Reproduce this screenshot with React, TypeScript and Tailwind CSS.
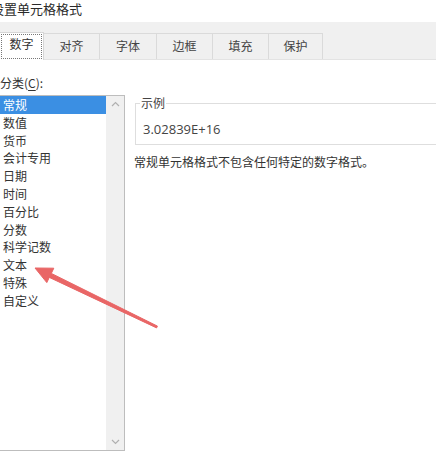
import React from "react";

const items = ["常规", "数值", "货币", "会计专用", "日期", "时间", "百分比", "分数", "科学记数", "文本", "特殊", "自定义"];
const tabs = [
  { t: "对齐", w: "w-[56px]" },
  { t: "字体", w: "w-[57px]" },
  { t: "边框", w: "w-[56px]" },
  { t: "填充", w: "w-[56px]" },
  { t: "保护", w: "w-[54px]" },
];

export default function App() {
  return (
    <div
      className="relative w-[436px] h-[459px] bg-white overflow-hidden text-[12px] text-[#333]"
      style={{ fontFamily: '"Noto Sans CJK SC", "Noto Sans", sans-serif' }}
    >
      {/* title */}
      <div className="h-[22px] flex items-center">
        <span className="-ml-[9px] text-[13px] leading-[16px] text-[#2a2a2a] -mt-[5px]">设置单元格格式</span>
      </div>

      {/* tab bar */}
      <div className="h-[38px] bg-[#f0f0f0] flex items-end border-b border-[#e3e3e3]">
        <div className="w-[44px] h-[28px] bg-white border-t border-r border-[#d6d6d6] p-[1px] relative top-[1px]">
          <div className="w-full h-full border border-dotted border-[#777] flex items-center justify-center pb-[6px] leading-[14px] text-[#333]">
            数字
          </div>
        </div>
        {tabs.map((tb) => (
          <div
            key={tb.t}
            className={`${tb.w} h-[26px] border-t border-r border-[#dadada] flex items-center justify-center pb-[1px] leading-[14px] text-[#444]`}
          >
            {tb.t}
          </div>
        ))}
      </div>

      {/* content */}
      <div className="flex">
        <div className="w-[125px] shrink-0">
          <div className="mt-[15px] h-[16px] leading-[16px] text-[#333]">
            分类(<span className="underline underline-offset-2">C</span>):
          </div>
          <div className="mt-[4px] h-[356px] border-t border-r border-b border-[#bdbdbd] flex">
            <div className="flex-1">
              {items.map((it, i) => (
                <div
                  key={it}
                  className={`h-[17.8px] leading-[17.8px] pl-[3px] ${i === 0 ? "bg-[#3b8fe3] text-white" : "text-[#333]"}`}
                >
                  {it}
                </div>
              ))}
            </div>
            <div className="w-[18px] bg-[#f0f0f0] flex flex-col justify-between items-center py-[5px]">
              <svg width="9" height="6" viewBox="0 0 9 6">
                <path d="M1 5 L4.5 1.5 L8 5" fill="none" stroke="#b0b0b0" strokeWidth="1.2" />
              </svg>
              <svg width="9" height="6" viewBox="0 0 9 6">
                <path d="M1 1 L4.5 4.5 L8 1" fill="none" stroke="#b0b0b0" strokeWidth="1.2" />
              </svg>
            </div>
          </div>
        </div>

        <div className="ml-[8px] pt-[43px] flex-1">
          <div className="relative ml-[2px] w-[400px] h-[42px] border-t border-l border-b border-[#dedede]">
            <span className="absolute -top-[9px] left-[4px] bg-white px-[1px] leading-[16px] text-[#444]">示例</span>
            <div
              className="pt-[17px] pl-[7px] text-[13px] leading-[16px] text-[#444]"
              style={{ fontFamily: '"Open Sans", "Noto Sans", sans-serif' }}
            >
              3.02839E+16
            </div>
          </div>
          <div className="mt-[9px] pl-[1px] leading-[16px] text-[#333]">常规单元格格式不包含任何特定的数字格式。</div>
        </div>
      </div>

      {/* red arrow annotation */}
      <svg className="absolute inset-0 pointer-events-none" width="436" height="459" viewBox="0 0 436 459">
        <polygon
          points="35,268 53.8,268.2 51.3,273.4 157.4,326.1 156.6,327.9 49.3,277.4 46.8,282.6"
          fill="#e96666"
          stroke="#e96666"
          strokeWidth="1"
          strokeLinejoin="round"
        />
      </svg>
    </div>
  );
}
